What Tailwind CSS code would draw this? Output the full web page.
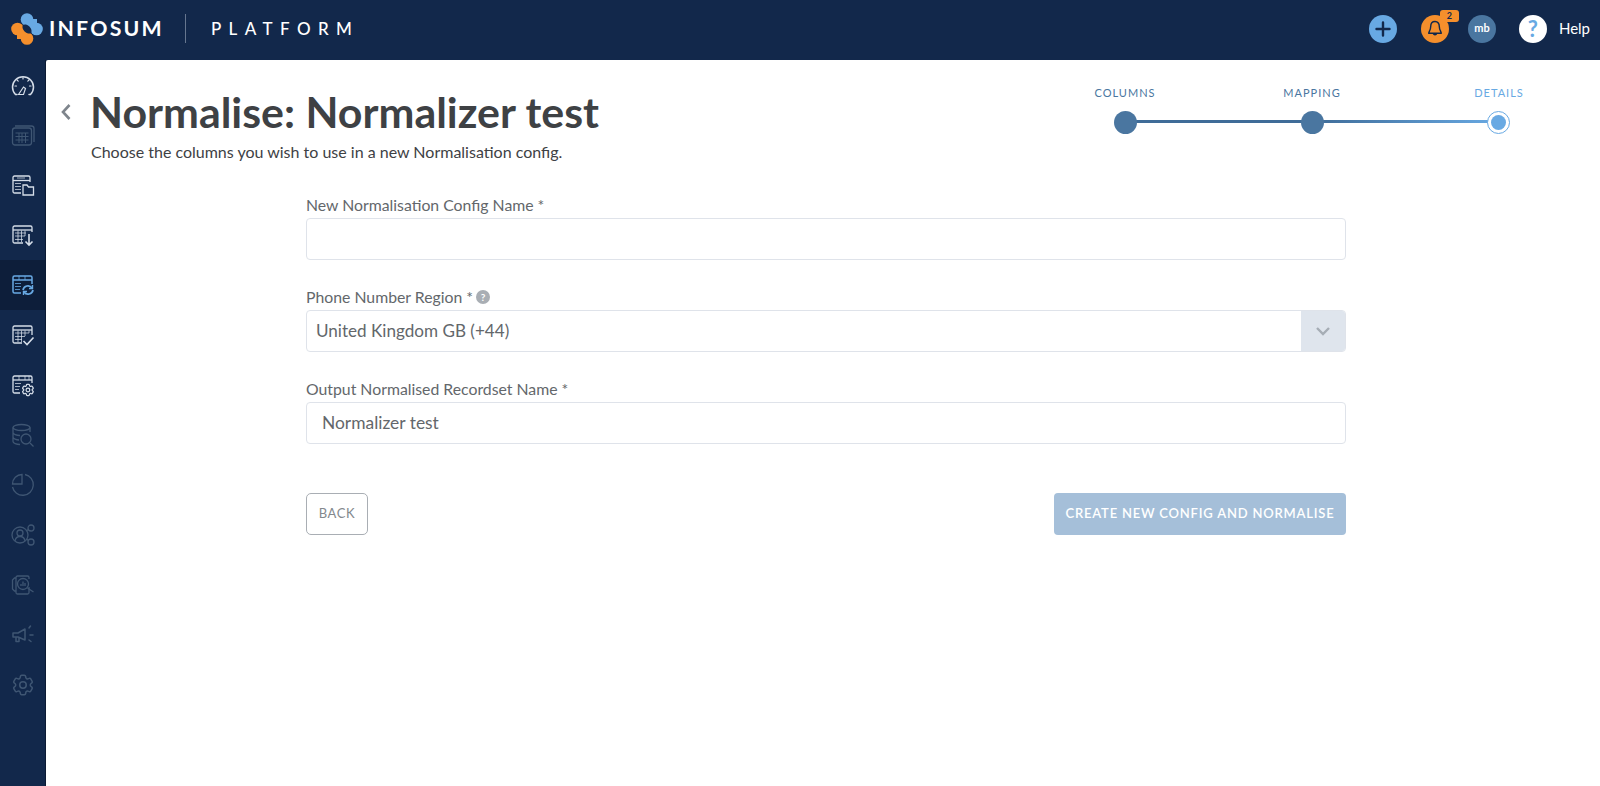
<!DOCTYPE html>
<html lang="en">
  <head>
    <meta charset="UTF-8" />
    <title>InfoSum Platform</title>
    <script src="https://cdn.jsdelivr.net/npm/@tailwindcss/browser@4"></script>
  </head>
  <body class="h-[786px] overflow-hidden bg-[#12284b] font-['Lato',sans-serif]">
    <!-- Top bar -->
    <header class="flex h-[60px] items-center pr-[10px] pb-[3px] pl-[11px]">
      <svg width="32" height="32" viewBox="0 0 32 32" class="shrink-0">
        <g fill="#68a9e3"><circle cx="16" cy="6.500" r="6.300"/><circle cx="25.500" cy="16" r="6.300"/><rect x="15" y="6" width="11" height="10"/></g>
        <g fill="#f58f2c"><circle cx="6.500" cy="16" r="6.300"/><circle cx="16" cy="25.500" r="6.300"/><rect x="6" y="16" width="10" height="10"/></g>
        <ellipse cx="16" cy="16" rx="5.500" ry="3.400" transform="rotate(45 16 16)" fill="#12284b"/>
      </svg>
      <span class="ml-[6px] text-[21.300px] leading-none font-bold tracking-[2.200px] text-white">INFOSUM</span>
      <span class="ml-[21px] h-[29px] w-px bg-[#66768f]"></span>
      <span class="ml-[25px] text-[17px] leading-none font-medium tracking-[7.400px] text-white">PLATFORM</span>
      <div class="ml-auto flex items-center">
        <button class="flex h-[28px] w-[28px] items-center justify-center rounded-full bg-[#68a9e3]">
          <svg width="16" height="16" viewBox="0 0 16 16"><path d="M8 1.500v13M1.500 8h13" stroke="#12284b" stroke-width="2.400" stroke-linecap="round"/></svg>
        </button>
        <div class="relative ml-[24px] flex h-[28px] w-[28px] items-center justify-center rounded-full bg-[#f58f2c]">
          <svg width="20" height="20" viewBox="0 0 20 20" fill="none" stroke="#12284b" stroke-width="1.400" stroke-linejoin="round"><path d="M10 2.500c-3 0-4.300 2.400-4.300 5 0 3.500-1.900 5-2 6.800h12.600c-.1-1.800-2-3.300-2-6.800 0-2.600-1.300-5-4.300-5z"/><path d="M8.300 14.500a1.800 1.800 0 0 0 3.400 0"/></svg>
          <span class="absolute -top-[5px] left-[19px] flex h-[12px] w-[19px] items-center justify-center rounded-[3px] bg-[#f58f2c] text-[9px] font-bold text-[#12284b]">2</span>
        </div>
        <div class="ml-[19px] flex h-[28px] w-[28px] items-center justify-center rounded-full bg-[#4a76a0] text-[11px] font-bold text-white">mb</div>
        <div class="ml-[23px] flex h-[28px] w-[28px] items-center justify-center rounded-full bg-white text-[22px] font-bold text-[#68a9e3]">?</div>
        <span class="ml-[12px] text-[15px] text-white">Help</span>
      </div>
    </header>

    <div class="flex h-[726px]">
      <!-- Sidebar -->
      <nav class="flex w-[46px] shrink-0 flex-col border-r border-[#0b1a33]">
        <a class="flex h-[50px] items-center justify-center">
          <svg width="24" height="24" viewBox="0 0 24 24" fill="none" stroke="#d5dde8" stroke-width="1.500" stroke-linecap="round"><path d="M6 21.500H4.500A10.500 10.500 0 1 1 19.500 21.500H18"/><path d="M7.500 21.500l5-7.500 2 1.500-2 6z" stroke-width="1.200"/><path d="M12 4.500v1.500M6 7l1.200 1.200M18 7l-1.200 1.200M4 13h1.500M18.500 13h1.500" stroke-width="1.200"/></svg>
        </a>
        <a class="flex h-[50px] items-center justify-center">
          <svg width="24" height="24" viewBox="0 0 24 24" fill="none" stroke="#3f5673" stroke-width="1.300"><rect x="1.500" y="5" width="19" height="17" rx="2.500"/><path d="M4 3h16.500a2.500 2.500 0 0 1 2.500 2.500V19"/><path d="M4.500 10h13M4.500 13.500h13M4.500 17h13M8 10v10M11 10v10M14.500 10v10" stroke-width="1"/></svg>
        </a>
        <a class="flex h-[50px] items-center justify-center">
          <svg width="24" height="24" viewBox="0 0 24 24" fill="none" stroke="#d5dde8" stroke-width="1.300"><path d="M10 20H3.500A1.500 1.500 0 0 1 2 18.500v-14A1.500 1.500 0 0 1 3.500 3h14A1.500 1.500 0 0 1 19 4.500V9"/><path d="M2 7.500h17" /><path d="M4 10.500h6M4 13.500h6M4 16.500h6M6 5h8" stroke-width="1" opacity=".75"/><path d="M12 12h4l1.500 2h5v8h-10.500z"/></svg>
        </a>
        <a class="flex h-[50px] items-center justify-center">
          <svg width="24" height="24" viewBox="0 0 24 24" fill="none" stroke="#d5dde8" stroke-width="1.300"><path d="M12 20H3.500A1.500 1.500 0 0 1 2 18.500v-14A1.500 1.500 0 0 1 3.500 3h16A1.500 1.500 0 0 1 21 4.500V9"/><path d="M2 7h19"/><path d="M4 10h11M4 13h10M4 16.500h8M7 7.500V19M10.500 7.500V19M14 7.500V13" stroke-width="1" opacity=".75"/><path d="M18 11v11M14.500 18.500L18 22l3.500-3.500" stroke-width="1.600"/></svg>
        </a>
        <a class="flex h-[50px] items-center justify-center bg-[#0d1e3a]">
          <svg width="24" height="24" viewBox="0 0 24 24" fill="none" stroke="#68a9e3" stroke-width="1.500"><path d="M10 20H3.500A1.500 1.500 0 0 1 2 18.500v-14A1.500 1.500 0 0 1 3.500 3h16A1.500 1.500 0 0 1 21 4.500V11"/><path d="M2 7h19"/><path d="M4 10.500h6M4 13.500h6M4 16.500h5M8 3v4M14 3v4" stroke-width="1" opacity=".8"/><path d="M12 17a5 5 0 0 1 9-2M22 17a5 5 0 0 1-9 2" stroke-width="1.700"/><path d="M21.500 12v3.500H18M12.500 22v-3.500H16" stroke-width="1.400"/></svg>
        </a>
        <a class="flex h-[50px] items-center justify-center">
          <svg width="24" height="24" viewBox="0 0 24 24" fill="none" stroke="#d5dde8" stroke-width="1.300"><path d="M11 20H3.500A1.500 1.500 0 0 1 2 18.500v-14A1.500 1.500 0 0 1 3.500 3h16A1.500 1.500 0 0 1 21 4.500V12"/><path d="M2 7h19"/><path d="M4 10h14M4 13.500h10M4 16.500h7M7 7.500V19M10.500 7.500V19M14 7.500V13M18 7.500V10" stroke-width="1" opacity=".75"/><path d="M12.500 18l3.500 3.500 6.500-7" stroke-width="1.600"/></svg>
        </a>
        <a class="flex h-[50px] items-center justify-center">
          <svg width="24" height="24" viewBox="0 0 24 24" fill="none" stroke="#d5dde8" stroke-width="1.300"><path d="M9 20H3.500A1.500 1.500 0 0 1 2 18.500v-14A1.500 1.500 0 0 1 3.500 3h16A1.500 1.500 0 0 1 21 4.500V10"/><path d="M2 7h19"/><path d="M4 10.500h6M4 13.500h5M4 16.500h4M8 3v4M14 3v4M18 3v4" stroke-width="1" opacity=".75"/><g transform="translate(9.500 9.500) scale(.62)" stroke-width="2"><path d="M9.594 3.940c.090-.542.560-.940 1.110-.940h2.593c.550 0 1.020.398 1.110.940l.213 1.281c.063.374.313.686.645.870.074.040.147.083.220.127.325.196.720.257 1.075.124l1.217-.456a1.125 1.125 0 0 1 1.370.490l1.296 2.247a1.125 1.125 0 0 1-.260 1.431l-1.003.827c-.293.241-.438.613-.430.992a7.723 7.723 0 0 1 0 .255c-.008.378.137.750.430.991l1.004.827c.424.350.534.955.260 1.430l-1.298 2.247a1.125 1.125 0 0 1-1.369.491l-1.217-.456c-.355-.133-.750-.072-1.076.124a6.470 6.470 0 0 1-.220.128c-.331.183-.581.495-.644.869l-.213 1.281c-.090.543-.560.940-1.110.940h-2.594c-.550 0-1.019-.398-1.110-.940l-.213-1.281c-.062-.374-.312-.686-.644-.870a6.520 6.520 0 0 1-.220-.127c-.325-.196-.720-.257-1.076-.124l-1.217.456a1.125 1.125 0 0 1-1.369-.490l-1.297-2.247a1.125 1.125 0 0 1 .260-1.431l1.004-.827c.292-.240.437-.613.430-.991a6.932 6.932 0 0 1 0-.255c.007-.380-.138-.751-.430-.992l-1.004-.827a1.125 1.125 0 0 1-.260-1.430l1.297-2.247a1.125 1.125 0 0 1 1.370-.491l1.216.456c.356.133.751.072 1.076-.124.072-.044.146-.086.220-.128.332-.183.582-.495.644-.869l.214-1.280z" fill="#12284b"/><circle cx="12" cy="12" r="3"/></g></svg>
        </a>
        <a class="flex h-[50px] items-center justify-center">
          <svg width="24" height="24" viewBox="0 0 24 24" fill="none" stroke="#3f5673" stroke-width="1.300"><ellipse cx="10.500" cy="4.500" rx="8.500" ry="3"/><path d="M2 4.500v14c0 1.700 3.500 3 7 3M19 4.500V9M2 9.500c0 1.700 3.500 3 7 3M2 14c0 1.700 3.500 3 6 3"/><circle cx="15" cy="16" r="5"/><path d="M19 20l3.500 3.500"/></svg>
        </a>
        <a class="flex h-[50px] items-center justify-center">
          <svg width="24" height="24" viewBox="0 0 24 24" fill="none" stroke="#3f5673" stroke-width="1.300"><path d="M14 1.500a10.500 10.500 0 1 1-12.500 12.500"/><path d="M11 1.500A9.500 9.500 0 0 0 1.500 11H11z"/></svg>
        </a>
        <a class="flex h-[50px] items-center justify-center">
          <svg width="24" height="24" viewBox="0 0 24 24" fill="none" stroke="#3f5673" stroke-width="1.300"><circle cx="9" cy="12" r="8"/><circle cx="9" cy="10" r="3"/><path d="M4 18c.5-3 2.500-4.500 5-4.500s4.500 1.500 5 4.500"/><circle cx="20" cy="5" r="3"/><circle cx="20" cy="19" r="3"/><path d="M15 8l2.500-1.500M15.500 16l2 1.500"/></svg>
        </a>
        <a class="flex h-[50px] items-center justify-center">
          <svg width="24" height="24" viewBox="0 0 24 24" fill="none" stroke="#3f5673" stroke-width="1.300"><path d="M5 5H3.500L1.500 7v9l2 2H5"/><path d="M18 14v5.500a1.500 1.500 0 0 1-1.500 1.500h-10A1.500 1.500 0 0 1 5 19.500v-15A1.500 1.500 0 0 1 6.500 3h10A1.500 1.500 0 0 1 18 4.500V6"/><circle cx="12" cy="11" r="5.500"/><path d="M10 13v-2M12 13V8.500M14 13v-3M16.500 15l6 4" /></svg>
        </a>
        <a class="flex h-[50px] items-center justify-center">
          <svg width="24" height="24" viewBox="0 0 24 24" fill="none" stroke="#3f5673" stroke-width="1.500" stroke-linecap="round" stroke-linejoin="round"><path d="M2 10h5l7-4v11l-7-3H2z"/><path d="M5 14.500v4h3v-3.500"/><path d="M18 5l1.500-2M19 12h3M18 17l2 1.500"/></svg>
        </a>
        <a class="flex h-[50px] items-center justify-center">
          <svg width="26" height="26" viewBox="0 0 24 24" fill="none" stroke="#3f5673" stroke-width="1.400"><path d="M9.594 3.940c.090-.542.560-.940 1.110-.940h2.593c.550 0 1.020.398 1.110.940l.213 1.281c.063.374.313.686.645.870.074.040.147.083.220.127.325.196.720.257 1.075.124l1.217-.456a1.125 1.125 0 0 1 1.370.490l1.296 2.247a1.125 1.125 0 0 1-.260 1.431l-1.003.827c-.293.241-.438.613-.430.992a7.723 7.723 0 0 1 0 .255c-.008.378.137.750.430.991l1.004.827c.424.350.534.955.260 1.430l-1.298 2.247a1.125 1.125 0 0 1-1.369.491l-1.217-.456c-.355-.133-.750-.072-1.076.124a6.470 6.470 0 0 1-.220.128c-.331.183-.581.495-.644.869l-.213 1.281c-.090.543-.560.940-1.110.940h-2.594c-.550 0-1.019-.398-1.110-.940l-.213-1.281c-.062-.374-.312-.686-.644-.870a6.520 6.520 0 0 1-.220-.127c-.325-.196-.720-.257-1.076-.124l-1.217.456a1.125 1.125 0 0 1-1.369-.490l-1.297-2.247a1.125 1.125 0 0 1 .260-1.431l1.004-.827c.292-.240.437-.613.430-.991a6.932 6.932 0 0 1 0-.255c.007-.380-.138-.751-.430-.992l-1.004-.827a1.125 1.125 0 0 1-.260-1.430l1.297-2.247a1.125 1.125 0 0 1 1.370-.491l1.216.456c.356.133.751.072 1.076-.124.072-.044.146-.086.220-.128.332-.183.582-.495.644-.869l.214-1.280z"/><circle cx="12" cy="12" r="3"/></svg>
        </a>
      </nav>

      <!-- Main -->
      <main class="flex-1 rounded-tl-[2px] bg-white">
        <div class="flex h-[135px] pl-[14px]">
          <svg width="12" height="18" viewBox="0 0 12 18" class="mt-[43px] shrink-0" fill="none" stroke="#7e858c" stroke-width="2.600"><path d="M9.500 2L3 9l6.500 7"/></svg>
          <div class="ml-[18px] pt-[25px]">
            <h1 class="text-[42.900px] leading-[54px] font-bold text-[#3e4144]">Normalise: Normalizer test</h1>
            <p class="mt-[3px] pl-[1px] text-[16px] leading-[20px] text-[#3e4144]">Choose the columns you wish to use in a new Normalisation config.</p>
          </div>
          <!-- Stepper -->
          <div class="mr-[101px] ml-auto w-[374px] pt-[26px]">
            <div class="flex h-[14px] justify-between text-[11px] leading-[14px] tracking-[1px]">
              <span class="w-0 whitespace-nowrap"><span class="block w-[80px] -translate-x-[40px] text-center text-[#4a76a0]">COLUMNS</span></span>
              <span class="w-0 whitespace-nowrap"><span class="block w-[80px] -translate-x-[40px] text-center text-[#4a76a0]">MAPPING</span></span>
              <span class="w-0 whitespace-nowrap"><span class="block w-[80px] -translate-x-[40px] text-center text-[#68a9e3]">DETAILS</span></span>
            </div>
            <div class="relative mt-[10px] flex h-[24px] items-center justify-between">
              <div class="absolute top-[10px] right-0 left-0 h-[3px] bg-[linear-gradient(to_right,#3f6c98_0%,#3f6c98_50%,#68a9e3_100%)]"></div>
              <span class="relative -ml-[11px] h-[23px] w-[23px] rounded-full bg-[#4a76a0]"></span>
              <span class="relative h-[23px] w-[23px] rounded-full bg-[#4a76a0]"></span>
              <span class="relative -mr-[11px] flex h-[23px] w-[23px] items-center justify-center rounded-full border border-[#68a9e3] bg-white"><span class="h-[15px] w-[15px] rounded-full bg-[#68a9e3]"></span></span>
            </div>
          </div>
        </div>

        <!-- Form -->
        <form class="ml-[260px] w-[1040px]">
          <label class="block text-[15.800px] leading-[20px] text-[#63676b]">New Normalisation Config Name *</label>
          <input type="text" class="mt-[3px] block h-[42px] w-full rounded-[4px] border border-[#dfe3ea] bg-white px-[15px] pb-[2px] text-[17.400px] text-[#63676b]" />

          <label class="mt-[27px] flex items-center text-[15.800px] leading-[20px] text-[#63676b]">Phone Number Region *<span class="ml-[3px] flex h-[14px] w-[14px] items-center justify-center rounded-full bg-[#a9aeb4] text-[10px] font-bold text-white">?</span></label>
          <div class="mt-[3px] flex h-[42px] w-full items-center overflow-hidden rounded-[4px] border border-[#dfe3ea]">
            <span class="flex-1 pb-[1px] pl-[9px] text-[17.100px] text-[#63676b]">United Kingdom GB (+44)</span>
            <span class="flex h-full w-[44px] items-center justify-center bg-[#dfe5ed]">
              <svg width="16" height="10" viewBox="0 0 16 10" fill="none" stroke="#a6adb5" stroke-width="2.400"><path d="M2 2l6 6 6-6"/></svg>
            </span>
          </div>

          <label class="mt-[27px] block text-[15.800px] leading-[20px] text-[#63676b]">Output Normalised Recordset Name *</label>
          <input type="text" value="Normalizer test" class="mt-[3px] block h-[42px] w-full rounded-[4px] border border-[#dfe3ea] bg-white px-[15px] pb-[2px] text-[17.400px] text-[#63676b]" />

          <div class="mt-[49px] flex items-center justify-between">
            <button type="button" class="h-[42px] w-[62px] rounded-[5px] border border-[#a9aeb4] text-[13px] tracking-[0.600px] text-[#83888d]">BACK</button>
            <button type="button" class="h-[42px] w-[292px] rounded-[4px] bg-[#a5bfd9] text-[13px] font-semibold tracking-[0.800px] text-white">CREATE NEW CONFIG AND NORMALISE</button>
          </div>
        </form>
      </main>
    </div>
  </body>
</html>
